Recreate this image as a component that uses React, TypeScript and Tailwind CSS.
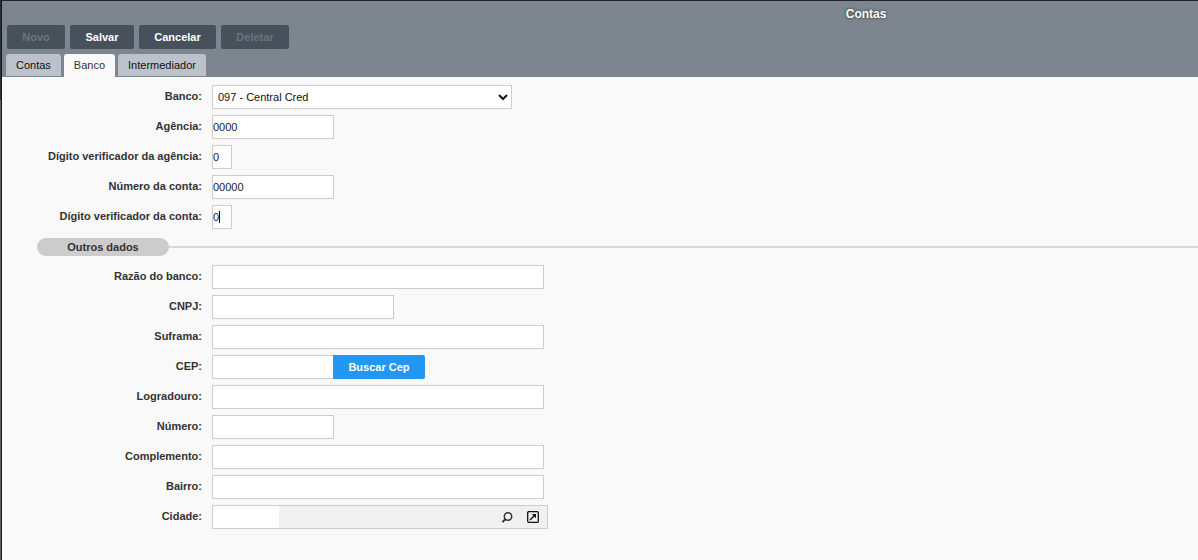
import { useState, type ReactNode } from "react";

const TABS = [
  { id: "contas", label: "Contas" },
  { id: "banco", label: "Banco" },
  { id: "intermediador", label: "Intermediador" },
];

const ACTIONS = [
  { label: "Novo", width: "w-[58px]", disabled: true },
  { label: "Salvar", width: "w-16", disabled: false },
  { label: "Cancelar", width: "w-[77px]", disabled: false },
  { label: "Deletar", width: "w-[68px]", disabled: true },
];

const inputClass = "h-6 border border-[#cccccc] bg-white text-[11px] text-[#222222] outline-none";

function Row({ id, label, children }: { id: string; label: string; children: ReactNode }) {
  return (
    <div className="flex h-6 gap-2.5">
      <label htmlFor={id} className="w-[200px] shrink-0 text-right font-bold leading-[23px] text-[#333333]">
        {label}
      </label>
      {children}
    </div>
  );
}

function Field({ id, label, width, value = "" }: { id: string; label: string; width: string; value?: string }) {
  return (
    <Row id={id} label={label}>
      <input id={id} type="text" defaultValue={value} className={`${inputClass} ${width}`} />
    </Row>
  );
}

export default function App() {
  const [activeTab, setActiveTab] = useState("banco");

  return (
    <div className="flex min-h-screen overflow-hidden bg-[#f9f9f9] font-['Liberation_Sans',Arial,sans-serif] text-[11px]">
      {/* Window edge */}
      <div className="flex w-0.5 shrink-0 flex-col border-r border-[#17181d]">
        <div className="h-25 bg-[#2b3038]" />
        <div className="flex-1 bg-[#626262]" />
      </div>

      <main className="min-w-0 flex-1">
        <header className="border-t border-[#22242b] bg-[#7d868f]">
          <h1 className="pl-[44.5%] pt-0.5 text-center text-xs font-bold leading-[22px] text-white [text-shadow:0_0_3px_#222222]">
            Contas
          </h1>

          <div className="flex gap-[5px] px-[5px]">
            {ACTIONS.map((action) => (
              <button
                key={action.label}
                type="button"
                disabled={action.disabled}
                className={`h-6 rounded-[2px] bg-[#47515b] font-bold text-white disabled:text-[#6b747c] ${action.width}`}
              >
                {action.label}
              </button>
            ))}
          </div>

          {/* Tab bar */}
          <nav className="mt-[5px] flex h-[23px] items-start gap-[3px] px-1">
            {TABS.map((tab) => (
              <button
                key={tab.id}
                type="button"
                onClick={() => setActiveTab(tab.id)}
                className={`rounded-t-[3px] px-2.5 leading-[22px] ${
                  activeTab === tab.id ? "bg-[#f9f9f9] pb-px text-[#333333]" : "bg-[#bcc2cb] text-[#111111]"
                }`}
              >
                {tab.label}
              </button>
            ))}
          </nav>
        </header>

        <form className="flex flex-col gap-1.5 pt-2" onSubmit={(e) => e.preventDefault()}>
          <Row id="banco" label="Banco:">
            <select id="banco" className="h-6 w-[300px] border border-[#cccccc] bg-white px-px text-[11px] text-[#111111]">
              <option>097 - Central Cred</option>
            </select>
          </Row>
          <Field id="agencia" label="Agência:" width="w-[122px]" value="0000" />
          <Field id="digito-agencia" label="Dígito verificador da agência:" width="w-5" value="0" />
          <Field id="conta" label="Número da conta:" width="w-[122px]" value="00000" />
          <Row id="digito-conta" label="Dígito verificador da conta:">
            <div className="relative">
              <input id="digito-conta" type="text" defaultValue="0" className={`${inputClass} w-5`} />
              <span className="absolute left-[7px] top-1.5 h-3 w-px bg-black" />
            </div>
          </Row>

          <div className="flex h-6 items-center pl-[35px]">
            <h2 className="h-[18px] w-[132px] rounded-full bg-[#cccccc] text-center font-bold leading-[18px] text-[#333333]">
              Outros dados
            </h2>
            <div className="h-0.5 flex-1 bg-[#d8d8d8]" />
          </div>

          <Field id="razao" label="Razão do banco:" width="w-[332px]" />
          <Field id="cnpj" label="CNPJ:" width="w-[182px]" />
          <Field id="suframa" label="Suframa:" width="w-[332px]" />
          <Row id="cep" label="CEP:">
            <div className="flex">
              <input id="cep" type="text" className={`${inputClass} w-[121px] border-r-0`} />
              <button type="button" className="h-6 w-[92px] rounded-r-[2px] bg-[#2196f3] font-bold text-white">
                Buscar Cep
              </button>
            </div>
          </Row>
          <Field id="logradouro" label="Logradouro:" width="w-[332px]" />
          <Field id="numero" label="Número:" width="w-[122px]" />
          <Field id="complemento" label="Complemento:" width="w-[332px]" />
          <Field id="bairro" label="Bairro:" width="w-[332px]" />
          <Row id="cidade" label="Cidade:">
            <div className="flex w-[336px] items-center border border-[#cccccc] bg-[#f0f0f0]">
              <input id="cidade" type="text" className="h-full w-[66px] bg-white outline-none" />
              <div className="ml-auto flex items-center gap-3.5 pr-2">
                <button type="button" aria-label="Pesquisar">
                  <svg className="h-3 w-3" viewBox="0 0 12 12" fill="none" stroke="#333333">
                    <circle cx="7" cy="5.5" r="3.7" strokeWidth="1.5" />
                    <path d="M4.3 8.2 1.4 11.1" strokeWidth="2" />
                  </svg>
                </button>
                <button type="button" aria-label="Abrir cadastro">
                  <svg className="h-3 w-3" viewBox="0 0 12 12" fill="none" stroke="#111111">
                    <rect x="0.7" y="0.7" width="10.6" height="10.6" rx="1" strokeWidth="1.3" />
                    <path d="M3 9 7.6 4.4" strokeWidth="1.4" />
                    <path d="M4.8 3H9v4.2Z" fill="#111111" stroke="none" />
                  </svg>
                </button>
              </div>
            </div>
          </Row>
        </form>
      </main>
    </div>
  );
}
